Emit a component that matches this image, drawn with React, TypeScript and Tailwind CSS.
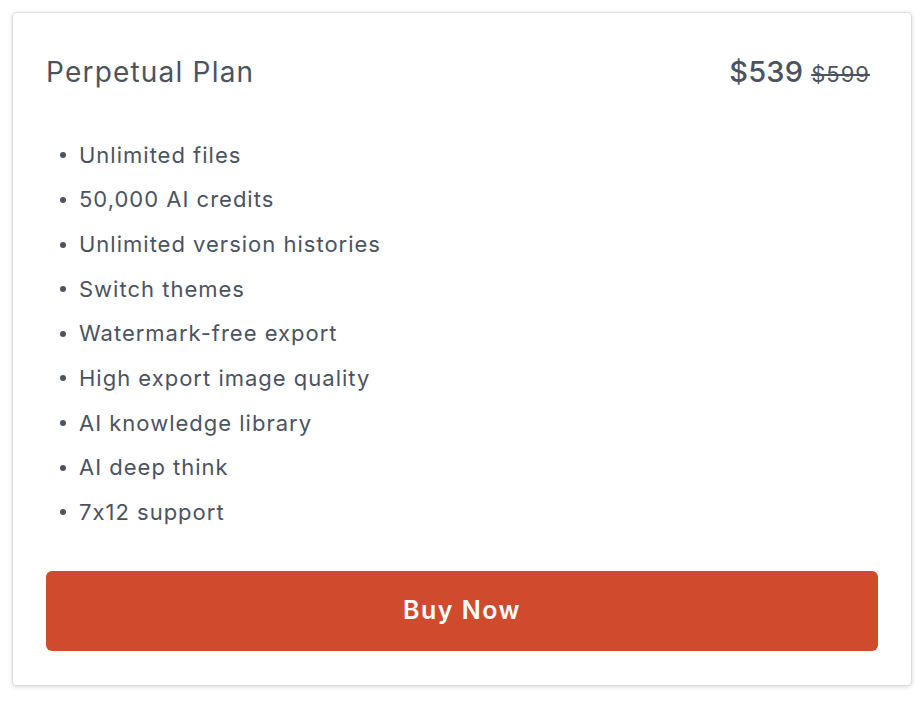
import React from "react";

const features = [
  "Unlimited files",
  "50,000 AI credits",
  "Unlimited version histories",
  "Switch themes",
  "Watermark-free export",
  "High export image quality",
  "AI knowledge library",
  "AI deep think",
  "7x12 support",
];

export default function App() {
  return (
    <div
      className="w-[924px] h-[701px] bg-white pt-[12px] pl-[12px] pr-[12px] [font-feature-settings:'calt'_0]"
      style={{ fontFamily: '"Inter", "Noto Sans", sans-serif' }}
    >
      <div className="w-[900px] h-[674px] rounded-[4px] border border-[#dcdcdc] bg-white shadow-[0_1px_4px_rgba(0,0,0,0.15)] px-[33px] pt-[38px] text-[#4b5361]">
        <div className="flex items-center justify-between h-[42px]">
          <h2 className="text-[28px] leading-[42px] font-normal tracking-[1.2px]">Perpetual Plan</h2>
          <div className="flex items-baseline gap-[8px] pr-[8px]">
            <span className="text-[29px] font-medium tracking-[0.2px]">$539</span>
            <span className="text-[22px] line-through tracking-[1px]">$599</span>
          </div>
        </div>
        <ul className="mt-[40px] pl-[14px]">
          {features.map((f) => (
            <li key={f} className="flex items-center h-[44.625px] text-[22px] tracking-[1px]">
              <span className="w-[6px] h-[6px] rounded-full bg-[#4b5361] mr-[13px]" />
              {f}
            </li>
          ))}
        </ul>
        <button className="mt-[36px] w-full h-[80px] rounded-[6px] bg-[#d04a2d] text-white text-[25px] font-semibold tracking-[1.5px]">
          Buy Now
        </button>
      </div>
    </div>
  );
}
